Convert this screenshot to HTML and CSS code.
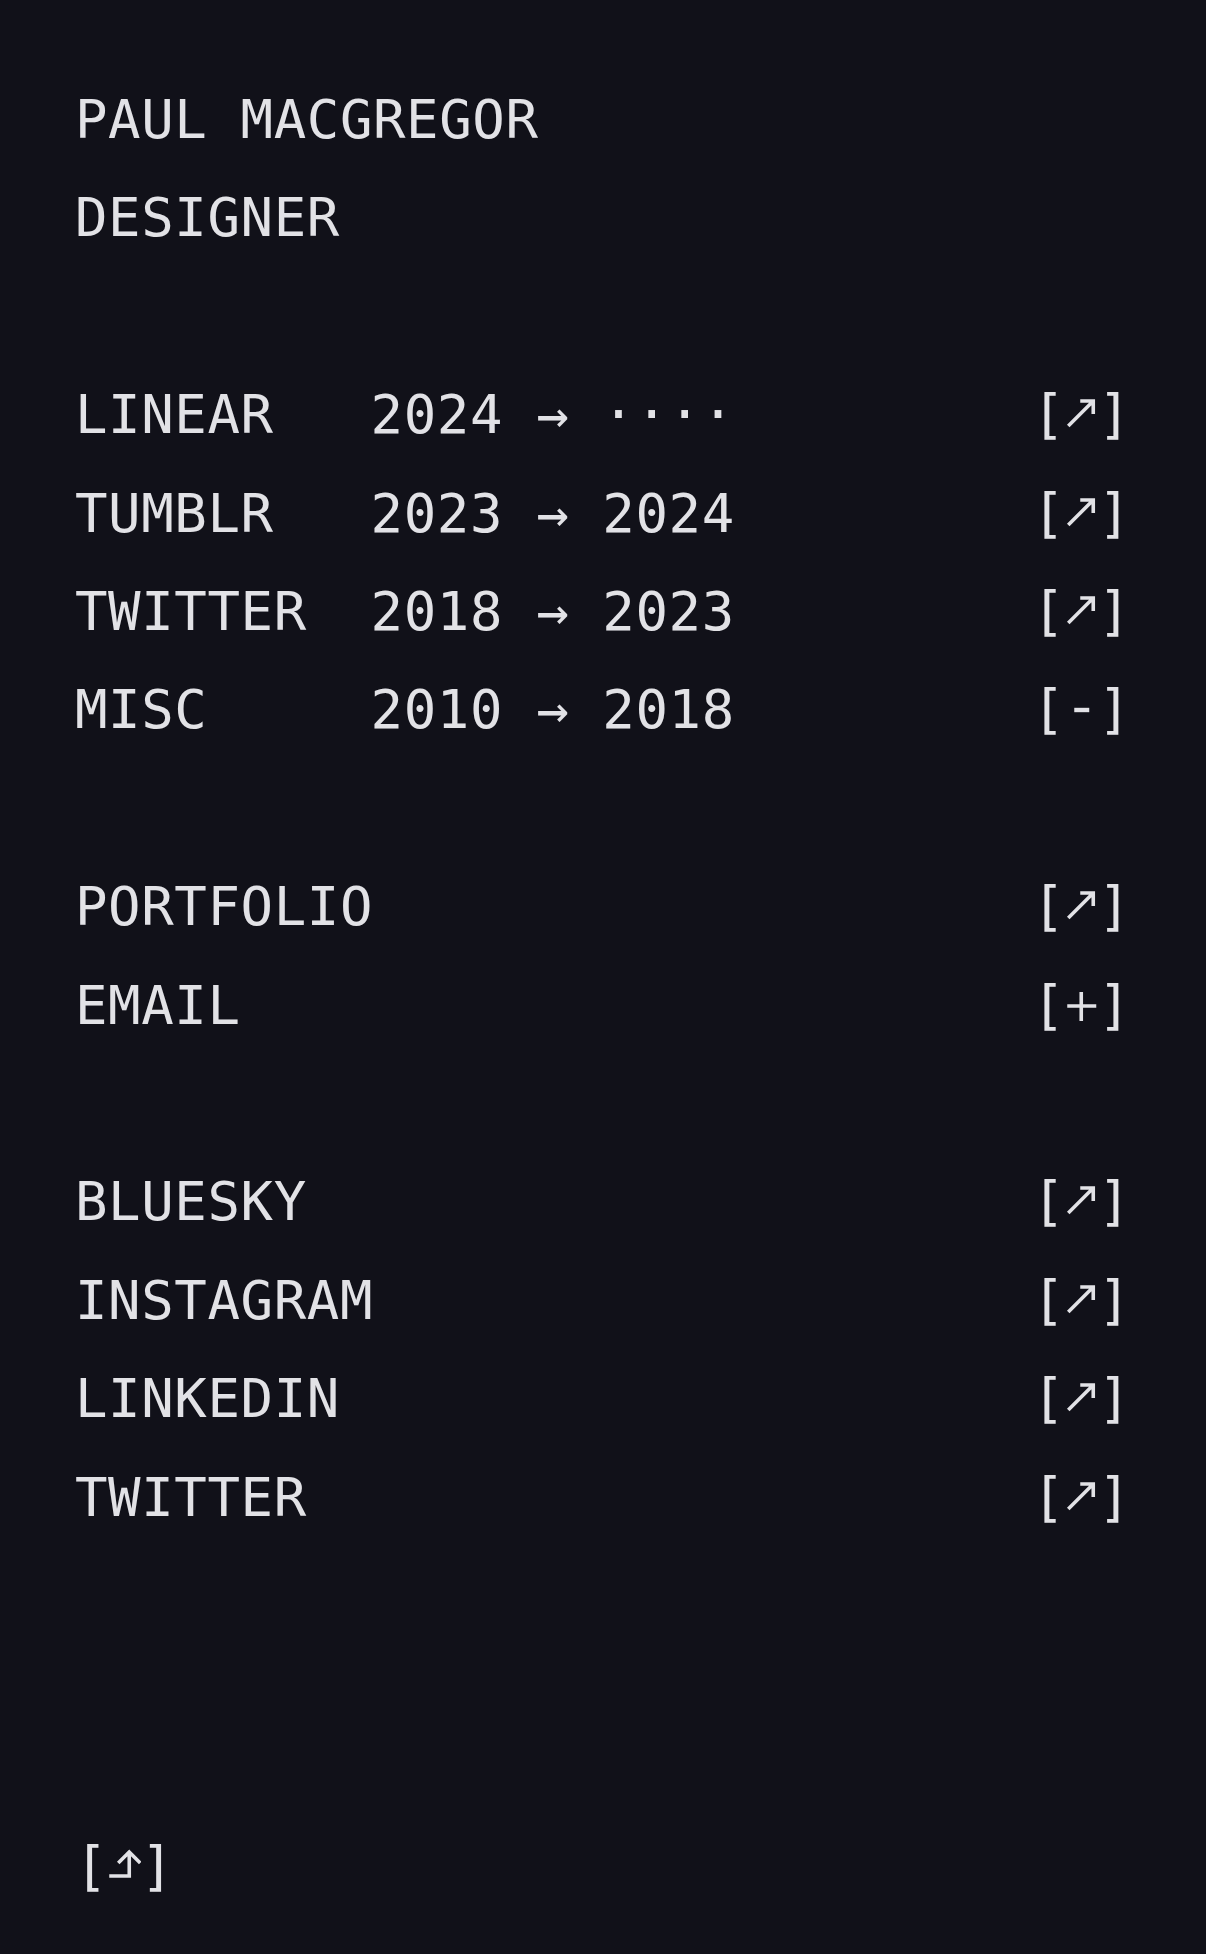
FILE: index.html
```html
<!DOCTYPE html>
<html lang="en">
<head>
<meta charset="utf-8">
<title>Paul MacGregor</title>
<link rel="stylesheet" href="styles.css">
</head>
<body>
<main class="page">
  <section class="group">
    <p class="line">PAUL MACGREGOR</p>
    <p class="line">DESIGNER</p>
  </section>

  <section class="group">
    <div class="row"><span class="name">LINEAR</span><span class="years">2024 → ····</span><span class="act">[<svg class="ico" viewBox="0 0 32 40"><path d="M3 33 L28 8 M15 8 H28 V21"/></svg>]</span></div>
    <div class="row"><span class="name">TUMBLR</span><span class="years">2023 → 2024</span><span class="act">[<svg class="ico" viewBox="0 0 32 40"><path d="M3 33 L28 8 M15 8 H28 V21"/></svg>]</span></div>
    <div class="row"><span class="name">TWITTER</span><span class="years">2018 → 2023</span><span class="act">[<svg class="ico" viewBox="0 0 32 40"><path d="M3 33 L28 8 M15 8 H28 V21"/></svg>]</span></div>
    <div class="row"><span class="name">MISC</span><span class="years">2010 → 2018</span><span class="act">[<svg class="ico" viewBox="0 0 32 40"><path d="M9 22 H24" class="thick"/></svg>]</span></div>
  </section>

  <section class="group">
    <div class="row"><span class="name">PORTFOLIO</span><span class="years"></span><span class="act">[<svg class="ico" viewBox="0 0 32 40"><path d="M3 33 L28 8 M15 8 H28 V21"/></svg>]</span></div>
    <div class="row"><span class="name">EMAIL</span><span class="years"></span><span class="act">[<svg class="ico" viewBox="0 0 32 40"><path d="M2 22 H31 M16 8 V37"/></svg>]</span></div>
  </section>

  <section class="group">
    <div class="row"><span class="name">BLUESKY</span><span class="years"></span><span class="act">[<svg class="ico" viewBox="0 0 32 40"><path d="M3 33 L28 8 M15 8 H28 V21"/></svg>]</span></div>
    <div class="row"><span class="name">INSTAGRAM</span><span class="years"></span><span class="act">[<svg class="ico" viewBox="0 0 32 40"><path d="M3 33 L28 8 M15 8 H28 V21"/></svg>]</span></div>
    <div class="row"><span class="name">LINKEDIN</span><span class="years"></span><span class="act">[<svg class="ico" viewBox="0 0 32 40"><path d="M3 33 L28 8 M15 8 H28 V21"/></svg>]</span></div>
    <div class="row"><span class="name">TWITTER</span><span class="years"></span><span class="act">[<svg class="ico" viewBox="0 0 32 40"><path d="M3 33 L28 8 M15 8 H28 V21"/></svg>]</span></div>
  </section>

  <footer class="foot"><span class="act">[<svg class="ico" viewBox="0 0 32 40"><path d="M1 31 H21 V7 M10 18 L21 7 L32 18"/></svg>]</span></footer>
</main>
</body>
</html>
```

FILE: styles.css
```css
html, body {
  margin: 0;
  padding: 0;
  background: #111119;
}

body {
  color: #e2e2e6;
  font-family: "DejaVu Sans Mono", "Liberation Mono", monospace;
  font-size: 54px;
  line-height: 98.4px;
  letter-spacing: 0.6px;
}

.page {
  padding: 71px 75px 0 75px;
  display: flex;
  flex-direction: column;
}

.group {
  display: flex;
  flex-direction: column;
}

.group + .group {
  margin-top: 98.4px;
}

.line {
  margin: 0;
  white-space: pre;
}

.row {
  display: grid;
  grid-template-columns: calc(9ch + 3px) 1fr auto;
  white-space: pre;
}

.years {
  white-space: pre;
}

.act {
  white-space: pre;
}

.ico {
  display: inline-block;
  width: 1ch;
  height: 40px;
  vertical-align: baseline;
  fill: none;
  stroke: currentColor;
  stroke-width: 3.6;
  stroke-linecap: butt;
  stroke-linejoin: miter;
}

.ico .thick {
  stroke-width: 4.4;
}

.foot {
  margin-top: 271px;
}
```
